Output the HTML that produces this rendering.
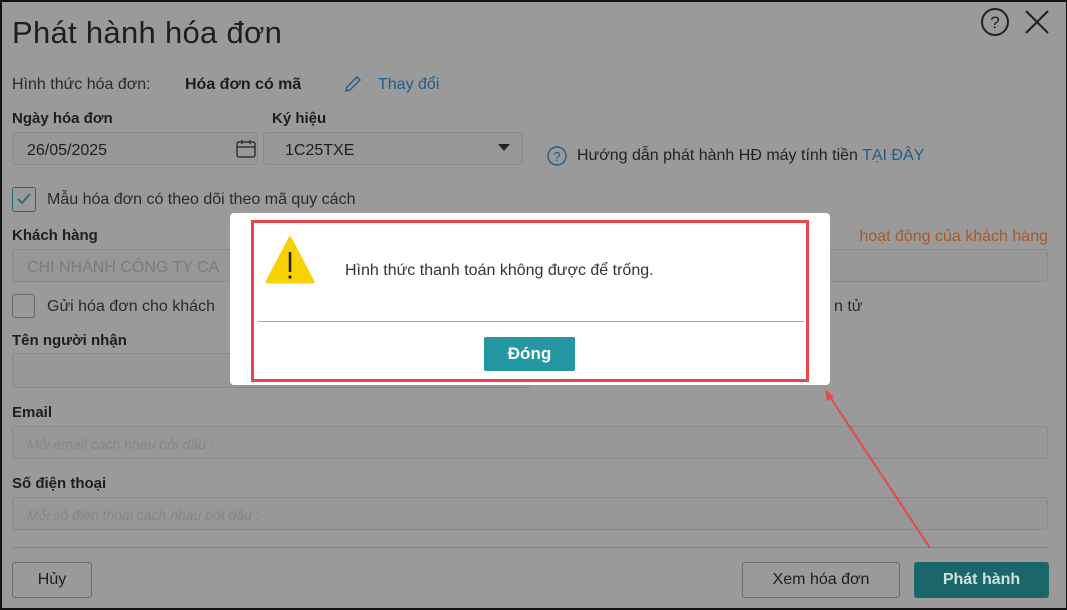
<!DOCTYPE html>
<html><head><meta charset="utf-8"><style>
*{box-sizing:border-box;margin:0;padding:0}
body{width:1067px;height:610px;overflow:hidden;background:#9a9a9a;font-family:"Liberation Sans","DejaVu Sans",sans-serif;color:#1e1e1e;position:relative}
.frame{position:absolute;left:0;top:0;width:1067px;height:610px;border:2px solid #111;border-right-width:1px;border-bottom-width:2px}
.a{position:absolute;white-space:nowrap}
.inp{position:absolute;background:#979797;border:1px solid #8a8a8a;border-radius:3px}
.lbl{font-size:15px;font-weight:bold;color:#1e1e1e}
.ph{font-style:italic;color:#858585;font-size:14px}
.btn{position:absolute;border:1px solid #6e6e6e;border-radius:3px;font-size:16px;display:flex;align-items:center;justify-content:center;color:#1e1e1e}
</style></head><body>
<div class="frame"></div>
<div class="a" style="left:12px;top:15px;font-size:31px;letter-spacing:0.3px">Phát hành hóa đơn</div>
<svg class="a" style="left:980px;top:6px" width="70" height="32" viewBox="0 0 70 32">
<circle cx="15" cy="16" r="13" fill="none" stroke="#222" stroke-width="2"/>
<text x="15" y="22" text-anchor="middle" font-size="17" font-family="Liberation Sans" fill="#222">?</text>
<path d="M46 5 L68 27 M68 5 L46 27" stroke="#222" stroke-width="2.2"/>
</svg>
<div class="a" style="left:12px;top:76px;font-size:16px;color:#2a2a2a">Hình thức hóa đơn:</div>
<div class="a" style="left:185px;top:76px;font-size:16px;font-weight:bold">Hóa đơn có mã</div>
<svg class="a" style="left:344px;top:75px" width="18" height="18" viewBox="0 0 18 18"><path d="M2 16 L3 12 L13 2 L16 5 L6 15 Z" fill="none" stroke="#1f5e8a" stroke-width="1.4"/></svg>
<div class="a" style="left:378px;top:76px;font-size:16px;color:#1f5e8a">Thay đổi</div>
<div class="a lbl" style="left:12px;top:110px">Ngày hóa đơn</div>
<div class="a lbl" style="left:272px;top:110px">Ký hiệu</div>
<div class="inp" style="left:12px;top:132px;width:246px;height:33px"></div>
<div class="a" style="left:27px;top:142px;font-size:16px">26/05/2025</div>
<svg class="a" style="left:235px;top:138px" width="22" height="22" viewBox="0 0 22 22"><rect x="2" y="4" width="18" height="15" rx="2" fill="none" stroke="#333" stroke-width="1.5"/><path d="M2 9 H20 M7 2 V6 M15 2 V6" stroke="#333" stroke-width="1.5"/></svg>
<div class="inp" style="left:263px;top:132px;width:260px;height:33px"></div>
<div class="a" style="left:285px;top:142px;font-size:16px">1C25TXE</div>
<svg class="a" style="left:498px;top:144px" width="12" height="8"><path d="M0 0 H12 L6 7 Z" fill="#222"/></svg>
<svg class="a" style="left:546px;top:145px" width="22" height="22"><circle cx="11" cy="11" r="9" fill="none" stroke="#1f5e8a" stroke-width="1.4"/><text x="11" y="16" text-anchor="middle" font-size="13" fill="#1f5e8a" font-family="Liberation Sans">?</text></svg>
<div class="a" style="left:577px;top:147px;font-size:16px;color:#222">Hướng dẫn phát hành HĐ máy tính tiền <span style="color:#1f5e8a">TẠI ĐÂY</span></div>
<div class="a" style="left:12px;top:187px;width:24px;height:25px;border:1.5px solid #1a6f73;border-radius:3px"></div>
<svg class="a" style="left:16px;top:192px" width="16" height="14"><path d="M2 7 L6 11 L14 2" fill="none" stroke="#1a6f73" stroke-width="1.8"/></svg>
<div class="a" style="left:47px;top:191px;font-size:16px;color:#2a2a2a">Mẫu hóa đơn có theo dõi theo mã quy cách</div>
<div class="a lbl" style="left:12px;top:227px">Khách hàng</div>
<div class="a" style="right:19px;top:228px;font-size:16px;color:#a85a28">hoạt động của khách hàng</div>
<div class="inp" style="left:12px;top:249px;width:1036px;height:33px"></div>
<div class="a" style="left:27px;top:259px;font-size:16px;color:#7c7c7c">CHI NHÁNH CÔNG TY CA</div>
<div class="a" style="left:12px;top:294px;width:23px;height:24px;border:1.5px solid #6a6a6a;border-radius:3px"></div>
<div class="a" style="left:47px;top:298px;font-size:16px;color:#2a2a2a">Gửi hóa đơn cho khách</div>
<div class="a" style="left:834px;top:298px;font-size:16px;color:#2a2a2a">n tử</div>
<div class="a lbl" style="left:12px;top:332px">Tên người nhận</div>
<div class="inp" style="left:12px;top:353px;width:518px;height:35px"></div>
<div class="a lbl" style="left:12px;top:404px">Email</div>
<div class="inp" style="left:12px;top:426px;width:1036px;height:33px"></div>
<div class="a ph" style="left:27px;top:436px">Mỗi email cách nhau bởi dấu ;</div>
<div class="a lbl" style="left:12px;top:475px">Số điện thoại</div>
<div class="inp" style="left:12px;top:497px;width:1036px;height:33px"></div>
<div class="a ph" style="left:27px;top:507px">Mỗi số điện thoại cách nhau bởi dấu ;</div>
<div class="a" style="left:12px;top:547px;width:1036px;height:1px;background:#858585"></div>
<div class="btn" style="left:12px;top:562px;width:80px;height:36px">Hủy</div>
<div class="btn" style="left:742px;top:562px;width:158px;height:36px">Xem hóa đơn</div>
<div class="btn" style="left:914px;top:562px;width:135px;height:36px;background:#1a6668;border-color:#1a6668;color:#cfe0e0;font-weight:bold">Phát hành</div>
<div class="a" style="left:230px;top:213px;width:600px;height:172px;background:#fff;border-radius:4px"></div>
<div class="a" style="left:251px;top:220px;width:558px;height:162px;border:3px solid #e8474a"></div>
<svg class="a" style="left:264px;top:235px" width="52" height="52" viewBox="0 0 52 52"><path d="M26 3 L49 47 H3 Z" fill="#f7d100" stroke="#f7d100" stroke-width="3" stroke-linejoin="round"/><path d="M26 17 V37" stroke="#222" stroke-width="2.5"/><circle cx="26" cy="42" r="1.6" fill="#222"/></svg>
<div class="a" style="left:345px;top:262px;font-size:16px;color:#333">Hình thức thanh toán không được để trống.</div>
<div class="a" style="left:258px;top:321px;width:546px;height:1px;background:#a0a4b0"></div>
<div class="a" style="left:484px;top:337px;width:91px;height:34px;background:#2596a3;border-radius:2px;color:#fff;font-weight:bold;font-size:17px;display:flex;align-items:center;justify-content:center">Đóng</div>
<svg class="a" style="left:0;top:0" width="1067" height="610"><path d="M930 548 L828 394" stroke="#e8474a" stroke-width="2"/><path d="M825 389 L827 401 L834 397 Z" fill="#e8474a"/></svg>
</body></html>
